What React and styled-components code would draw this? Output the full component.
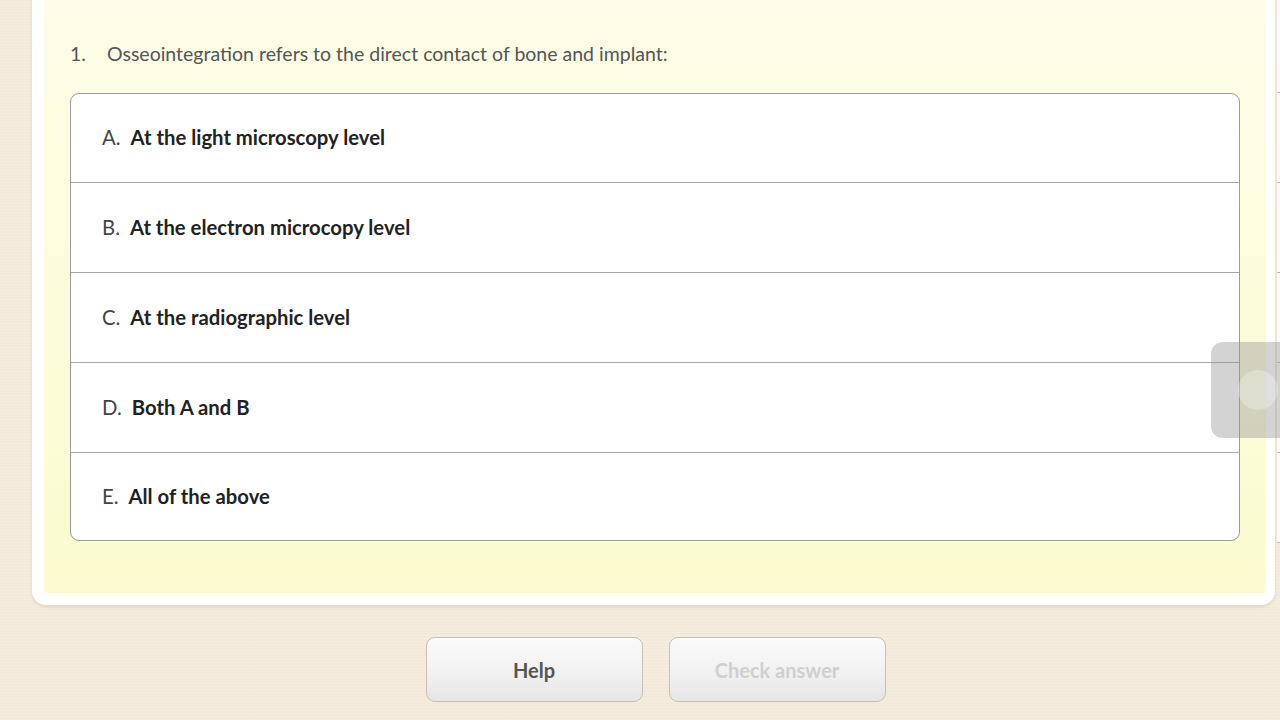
import styled, { createGlobalStyle } from 'styled-components';

const options = [
    { key: 'A', text: 'At the light microscopy level' },
    { key: 'B', text: 'At the electron microcopy level' },
    { key: 'C', text: 'At the radiographic level' },
    { key: 'D', text: 'Both A and B' },
    { key: 'E', text: 'All of the above' },
];

function App() {
    return (
        <>
            <GlobalStyle />
            <Stage>
                <Slides>
                    <Card>
                        <CardInner>
                            <Question>
                                <QuestionNum>1.</QuestionNum>
                                <span>Osseointegration refers to the direct contact of bone and implant:</span>
                            </Question>
                            <OptionList>
                                {options.map((o) => (
                                    <OptionRow key={o.key}>
                                        <OptionKey>{o.key}.</OptionKey>
                                        <OptionText>{o.text}</OptionText>
                                    </OptionRow>
                                ))}
                            </OptionList>
                        </CardInner>
                    </Card>
                    <PeekCard>
                        {[0, 1, 2, 3, 4].map((i) => (
                            <PeekRow key={i} />
                        ))}
                    </PeekCard>
                </Slides>
                <Actions>
                    <ActionButton>Help</ActionButton>
                    <ActionButton disabled>Check answer</ActionButton>
                </Actions>
                <ScrollHandle>
                    <HandleDot />
                </ScrollHandle>
            </Stage>
        </>
    );
}

export default App;

const GlobalStyle = createGlobalStyle`
    html, body {
        margin: 0;
        padding: 0;
        width: 1280px;
        height: 720px;
        overflow: hidden;
        font-family: "Source Sans Pro", Lato, "Liberation Sans", sans-serif;
    }
`;

const Stage = styled.div`
    position: relative;
    width: 1280px;
    height: 720px;
    overflow: hidden;
    background-color: #f5ebdc;
    background-image: repeating-linear-gradient(
        0deg,
        rgba(255, 255, 255, 0.12) 0px,
        rgba(255, 255, 255, 0.12) 1px,
        rgba(0, 0, 0, 0.008) 1px,
        rgba(0, 0, 0, 0.008) 3px
    );
`;

const Slides = styled.div`
    display: flex;
    align-items: flex-start;
    gap: 2px;
    margin-top: -20px;
    padding-left: 32px;
`;

const Card = styled.div`
    flex: 0 0 1243px;
    box-sizing: border-box;
    background: #ffffff;
    padding: 0 9px 12px 12px;
    border-radius: 0 0 14px 14px;
    box-shadow: 0 2px 3px rgba(150, 130, 100, 0.2);
`;

const CardInner = styled.div`
    background: linear-gradient(180deg, #fdfde9 0%, #fbfbcf 100%);
    padding: 60px 26px 52px 26px;
    border-radius: 0 0 4px 4px;
`;

const Question = styled.div`
    display: flex;
    align-items: center;
    height: 26px;
    font-size: 19.5px;
    color: #555;
    margin-bottom: 27px;
`;

const QuestionNum = styled.span`
    width: 37px;
`;

const OptionList = styled.div`
    background: #ffffff;
    border: 1px solid #9a9a9a;
    border-radius: 9px;
    overflow: hidden;
`;

const OptionRow = styled.div`
    display: flex;
    align-items: center;
    height: 90px;
    padding-left: 31px;
    padding-bottom: 2px;
    box-sizing: border-box;
    font-size: 20.3px;
    border-top: 1px solid #a6a6a6;

    &:first-child {
        border-top: none;
        height: 88px;
    }

    &:last-child {
        height: 88px;
    }
`;

const OptionKey = styled.span`
    color: #444;
    margin-right: 10px;
`;

const OptionText = styled.span`
    color: #222;
    font-weight: 700;
`;

const PeekCard = styled.div`
    flex: 0 0 20px;
    background: #fefef8;
    padding-top: 112px;
`;

const PeekRow = styled.div`
    height: 89px;
    border-top: 1px solid #bbb;

    &:last-child {
        border-bottom: 1px solid #bbb;
    }
`;

const Actions = styled.div`
    display: flex;
    justify-content: center;
    gap: 26px;
    margin-top: 32px;
    padding-left: 31px;
`;

const ActionButton = styled.button`
    width: 217px;
    height: 65px;
    border: 1px solid #c8bfb2;
    border-radius: 9px;
    background: linear-gradient(180deg, #fbfbfb 0%, #f0f0f0 60%, #e6e6e6 100%);
    box-shadow: inset 0 1px 0 #fff;
    font-family: inherit;
    font-size: 20px;
    font-weight: 700;
    color: ${(p) => (p.disabled ? '#cfcfcf' : '#555')};
`;

const ScrollHandle = styled.div`
    position: absolute;
    left: 1211px;
    top: 342px;
    width: 80px;
    height: 96px;
    border-radius: 12px;
    background: rgba(150, 150, 150, 0.42);
    display: flex;
    align-items: center;
    justify-content: center;
`;

const HandleDot = styled.div`
    width: 40px;
    height: 40px;
    border-radius: 50%;
    margin-left: 14px;
    background: rgba(255, 255, 255, 0.28);
`;
